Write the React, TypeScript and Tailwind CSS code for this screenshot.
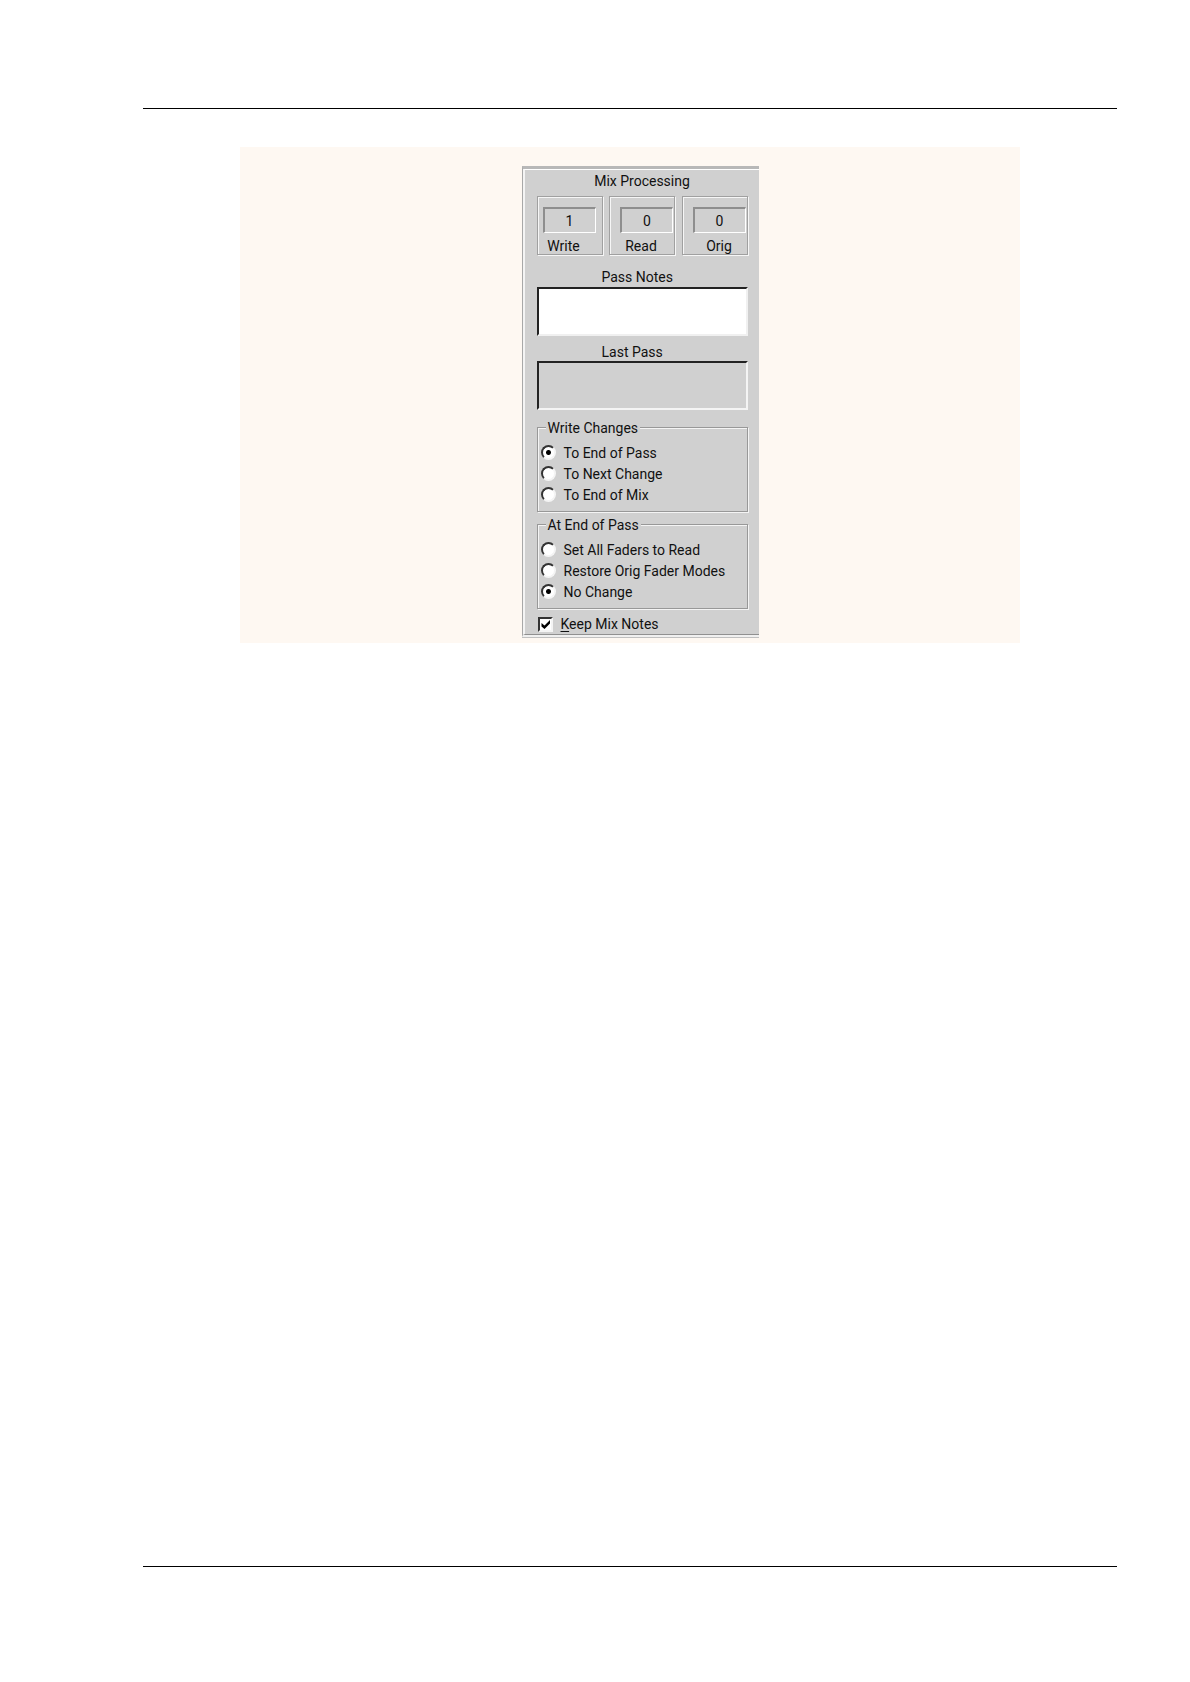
import { useState } from "react";

interface CounterParams {
  label: string;
  value: number;
  boxClass: string;
  labelClass: string;
}

const Counter = ({ label, value, boxClass, labelClass }: CounterParams) => {
  return (
    <div className={`h-[59px] w-[66px] border border-[#a0a0a0] shadow-[inset_1px_1px_0_#f6f6f6,1px_1px_0_#f6f6f6] ${boxClass}`}>
      <output
        aria-label={label}
        className="mt-[10px] flex h-[26px] w-[53px] items-center justify-center border-t-2 border-l-2 border-r border-b border-t-[#8e8e8e] border-l-[#8e8e8e] border-r-white border-b-white"
      >
        {value}
      </output>
      <div className={`mt-[3px] w-[53px] text-center leading-5 ${labelClass}`}>{label}</div>
    </div>
  );
};

interface RadioGroupParams {
  title: string;
  name: string;
  options: string[];
  initial: string;
}

const RadioGroup = ({ title, name, options, initial }: RadioGroupParams) => {
  const [selected, setSelected] = useState(initial);
  return (
    <fieldset className="relative border border-[#989898] px-[3px] pt-[14px] pb-[6px] shadow-[inset_1px_1px_0_#f4f4f4,1px_1px_0_#f4f4f4]">
      <legend className="absolute -top-[10px] left-2 bg-[#d0d0d0] px-0.5">{title}</legend>
      {options.map((option) => (
        <label key={option} className="flex h-[21px] items-center gap-2">
          <input
            type="radio"
            name={name}
            checked={selected === option}
            onChange={() => setSelected(option)}
            className="size-[15px] appearance-none rounded-full border-2 border-t-[#333] border-l-[#333] border-r-[#f4f4f4] border-b-[#f4f4f4] bg-white checked:bg-[radial-gradient(circle,#000_2px,#fff_3px)]"
          />
          {option}
        </label>
      ))}
    </fieldset>
  );
};

const MixProcessing = () => {
  return (
    <form className="w-[237px] border-t-[3px] border-b-2 border-l border-t-[#b8b8b8] border-b-[#f0f0f0] border-l-[#a8a8a8] bg-[#d0d0d0] font-[Roboto,sans-serif] text-[14px] leading-5 text-[#111] shadow-[0_1px_0_#c0c0c0]">
      <div className="border-t border-b border-l-2 border-t-white border-b-[#909090] border-l-[#f4f4f4] pt-px pr-[11px] pl-3">
        <h1 className="text-center">Mix Processing</h1>
        <div className="mt-[5px] flex justify-between">
          <Counter label="Write" value={1} boxClass="pl-[5px]" labelClass="pr-[11px]" />
          <Counter label="Read" value={0} boxClass="pl-[10px]" labelClass="pr-[11px]" />
          <Counter label="Orig" value={0} boxClass="pl-[10px]" labelClass="" />
        </div>
        <label htmlFor="pass-notes" className="mt-3 block pl-[65px]">
          Pass Notes
        </label>
        <textarea
          id="pass-notes"
          className="block h-[49px] w-full resize-none border-2 border-t-[#222] border-l-[#222] border-r-[#f0f0f0] border-b-[#f0f0f0] bg-white outline-none"
        />
        <label htmlFor="last-pass" className="mt-[7px] block pl-[65px] leading-[18px]">
          Last Pass
        </label>
        <textarea
          id="last-pass"
          readOnly
          className="block h-[49px] w-full resize-none border-2 border-t-[#222] border-l-[#222] border-r-[#f4f4f4] border-b-[#f4f4f4] bg-[#d0d0d0] outline-none"
        />
        <div className="mt-[17px] flex flex-col gap-3">
          <RadioGroup
            title="Write Changes"
            name="write-changes"
            options={["To End of Pass", "To Next Change", "To End of Mix"]}
            initial="To End of Pass"
          />
          <RadioGroup
            title="At End of Pass"
            name="end-of-pass"
            options={["Set All Faders to Read", "Restore Orig Fader Modes", "No Change"]}
            initial="No Change"
          />
        </div>
        <label className="mt-[5px] flex h-5 items-center gap-2 pl-px">
          <span className="grid">
            <input
              type="checkbox"
              defaultChecked
              className="peer col-start-1 row-start-1 size-[15px] appearance-none border-2 border-t-[#333] border-l-[#333] border-r-[#f4f4f4] border-b-[#f4f4f4] bg-white"
            />
            <svg viewBox="0 0 15 15" className="pointer-events-none invisible col-start-1 row-start-1 size-[15px] peer-checked:visible">
              <path d="M3.500 6v3.500l3 2.500L12 6.500V3L6.500 8.500z" fill="#000" />
            </svg>
          </span>
          <span>
            <u className="underline-offset-2">K</u>eep Mix Notes
          </span>
        </label>
      </div>
    </form>
  );
};

const App = () => {
  return (
    <div className="flex min-h-screen flex-col bg-white pt-[108px] pr-[73px] pb-[115px] pl-[143px]">
      <main className="flex-1 border-t border-b border-black px-[97px] pt-[38px]">
        <figure className="flex justify-center bg-[#fef8f2] pt-[19px] pb-[6px] pl-5">
          <MixProcessing />
        </figure>
      </main>
    </div>
  );
};

export default App;
